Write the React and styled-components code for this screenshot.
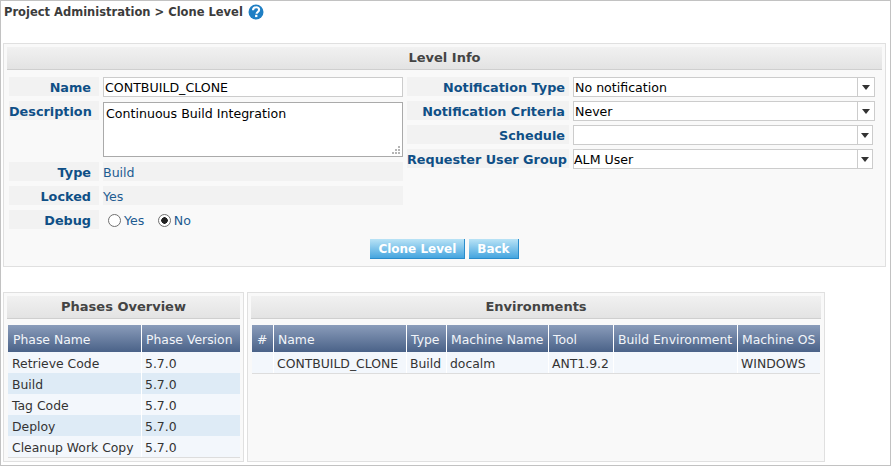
import React from 'react'
import styled, { createGlobalStyle } from 'styled-components'

const GlobalStyle = createGlobalStyle`
	html, body {
		margin: 0;
		padding: 0;
		background: #fff;
	}
	body {
		font-family: "DejaVu Sans", Verdana, sans-serif;
		font-size: 12.6px;
	}
`

const phases = ['Retrieve Code', 'Build', 'Tag Code', 'Deploy', 'Cleanup Work Copy']
const envColumns = [
	['#', 21], ['Name', 133], ['Type', 40], ['Machine Name', 102], ['Tool', 65], ['Build Environment', 124], ['Machine OS', 83],
]
const envRow = ['', 'CONTBUILD_CLONE', 'Build', 'docalm', 'ANT1.9.2', '', 'WINDOWS']

const HelpIcon = () => (
	<svg width="16" height="16" viewBox="0 0 16 16">
		<circle cx="8" cy="8" r="7.5" fill="#1f7fc4" />
		<path d="M5 6.2C5.1 4.3 6.4 3.3 8.1 3.3c1.7 0 3 1 3 2.5 0 1.2-.7 1.8-1.5 2.4-.7.5-1 .9-1 1.6" fill="none" stroke="#fff" strokeWidth="2.1" />
		<rect x="7.1" y="10.8" width="2.3" height="2.3" fill="#fff" />
	</svg>
)

const SelectField = ({ value, narrow }) => (
	<Select $narrow={narrow}>
		<span>{value}</span>
		<SelectArrow $narrow={narrow} />
	</Select>
)

const Radio = ({ label, checked }) => (
	<RadioLabel>
		<RadioDot $checked={checked} />
		{label}
	</RadioLabel>
)

export default function App() {
	return (
		<>
			<GlobalStyle />
			<Page>
				<Title>
					Project Administration &gt; Clone Level
					<HelpIcon />
				</Title>
				<Panel>
					<PanelHeader>Level Info</PanelHeader>
					<FormColumns>
						<LeftForm>
							<Label>Name</Label>
							<TextInput>CONTBUILD_CLONE</TextInput>
							<Label>Description</Label>
							<TextArea>
								Continuous Build Integration
								<Grip width="8" height="8" viewBox="0 0 8 8">
									<path d="M6 0h2v2H6zM3 3h2v2H3zM6 3h2v2H6zM0 6h2v2H0zM3 6h2v2H3zM6 6h2v2H6z" fill="#b5b5b5" />
								</Grip>
							</TextArea>
							<Label>Type</Label>
							<ReadOnly>Build</ReadOnly>
							<Label>Locked</Label>
							<ReadOnly>Yes</ReadOnly>
							<Label>Debug</Label>
							<RadioRow>
								<Radio label="Yes" />
								<Radio label="No" checked />
							</RadioRow>
						</LeftForm>
						<RightForm>
							<Label $tight>Notification Type</Label>
							<SelectField value="No notification" />
							<Label $tight>Notification Criteria</Label>
							<SelectField value="Never" />
							<Label $tight>Schedule</Label>
							<SelectField value="" narrow />
							<Label $tight>Requester User Group</Label>
							<SelectField value="ALM User" narrow />
						</RightForm>
					</FormColumns>
					<Buttons>
						<Button>Clone Level</Button>
						<Button>Back</Button>
					</Buttons>
				</Panel>
				<BottomRow>
					<SidePanel>
						<PanelHeader>Phases Overview</PanelHeader>
						<Table>
							<colgroup>
								<col width="133" />
								<col width="99" />
							</colgroup>
							<thead>
								<tr>
									<Th>Phase Name</Th>
									<Th>Phase Version</Th>
								</tr>
							</thead>
							<tbody>
								{phases.map((name, i) => (
									<tr key={name}>
										<Td $alt={i % 2 === 1}>{name}</Td>
										<Td $alt={i % 2 === 1}>5.7.0</Td>
									</tr>
								))}
							</tbody>
						</Table>
					</SidePanel>
					<MainPanel>
						<PanelHeader>Environments</PanelHeader>
						<Table>
							<colgroup>
								{envColumns.map(([name, width]) => <col key={name} width={width} />)}
							</colgroup>
							<thead>
								<tr>
									{envColumns.map(([name]) => <Th key={name}>{name}</Th>)}
								</tr>
							</thead>
							<tbody>
								<tr>
									{envRow.map((value, i) => <Td key={i}>{value}</Td>)}
								</tr>
							</tbody>
						</Table>
					</MainPanel>
				</BottomRow>
			</Page>
		</>
	)
}

const Page = styled.div`
	box-sizing: border-box;
	width: 891px;
	height: 466px;
	border: 1px solid #c2c2c2;
	padding: 0 4px 0 2px;
	overflow: hidden;
`

const Title = styled.h1`
	display: flex;
	align-items: center;
	gap: 5px;
	height: 22px;
	margin: 0 0 20px 1px;
	font-size: 11.5px;
	font-weight: bold;
	color: #3c3c3c;
`

const Panel = styled.section`
	box-sizing: border-box;
	height: 224px;
	padding: 3px;
	background: #f9f9f9;
	border: 1px solid #e0e0e0;
`

const PanelHeader = styled.h2`
	box-sizing: border-box;
	height: 23px;
	margin: 0;
	font-size: 13px;
	line-height: 21px;
	font-weight: bold;
	text-align: center;
	color: #444;
	background: linear-gradient(#f1f1f1, #e3e3e3);
	border-bottom: 1px solid #cfcfcf;
`

const FormColumns = styled.div`
	display: grid;
	grid-template-columns: 398px 1fr;
	margin: 7px 0 0 2px;
`

const LeftForm = styled.div`
	display: grid;
	grid-template-columns: 90px 300px;
	grid-template-rows: 20px 57px 20px 20px 20px;
	column-gap: 4px;
	row-gap: 4px;
	align-items: start;
`

const RightForm = styled.div`
	display: grid;
	grid-template-columns: 162px 302px;
	grid-auto-rows: 20px;
	column-gap: 4px;
	row-gap: 4px;
	align-content: start;
	align-items: start;
`

const Label = styled.label`
	box-sizing: border-box;
	height: 19px;
	padding-right: ${p => p.$tight ? '4px' : '8px'};
	font-size: 12.8px;
	line-height: 22px;
	font-weight: bold;
	text-align: right;
	white-space: nowrap;
	color: #0f4f86;
	background: #f2f2f2;
`

const TextInput = styled.div`
	box-sizing: border-box;
	height: 20px;
	padding-left: 1px;
	line-height: 19px;
	background: #fff;
	border: 1px solid #ccc;
`

const TextArea = styled.div`
	position: relative;
	box-sizing: border-box;
	height: 55px;
	margin-top: 1px;
	padding: 3px 2px;
	line-height: 16px;
	background: #fff;
	border: 1px solid #aaa;
`

const Grip = styled.svg`
	position: absolute;
	right: 2px;
	bottom: 2px;
`

const ReadOnly = styled.div`
	height: 19px;
	line-height: 21px;
	color: #1d5c91;
	background: #f2f2f2;
`

const RadioRow = styled.div`
	display: flex;
	gap: 13.5px;
	height: 21px;
	padding-left: 5px;
`

const RadioLabel = styled.span`
	display: flex;
	align-items: center;
	gap: 3px;
	color: #1d5c91;
`

const RadioDot = styled.i`
	box-sizing: border-box;
	width: 13px;
	height: 13px;
	border: 1px solid #707070;
	border-radius: 50%;
	background: ${p => p.$checked ? 'radial-gradient(circle, #222 0 3px, #fff 3.5px)' : '#fff'};
`

const Select = styled.div`
	display: flex;
	box-sizing: border-box;
	width: ${p => p.$narrow ? '300px' : '302px'};
	height: 20px;
	line-height: 19px;
	background: #fff;
	border: 1px solid #ccc;
	span {
		flex: 1;
		padding-left: ${p => p.$narrow ? '0' : '1px'};
	}
`

const SelectArrow = styled.b`
	position: relative;
	width: ${p => p.$narrow ? '14px' : '16px'};
	border-left: 1px solid #ccc;
	&::after {
		content: '';
		position: absolute;
		left: ${p => p.$narrow ? '3px' : '4px'};
		top: 7px;
		border: 4px solid transparent;
		border-top: 5px solid #333;
		border-bottom: 0;
	}
`

const Buttons = styled.div`
	display: flex;
	justify-content: center;
	gap: 4px;
	margin-top: 9px;
`

const Button = styled.button`
	box-sizing: border-box;
	height: 20px;
	padding: 0 8px;
	font-family: inherit;
	font-size: 12px;
	font-weight: bold;
	color: #fff;
	background: linear-gradient(#b9e3f6, #45a5df);
	border: 0;
	border-bottom: 1px solid #2a8ccb;
	border-right: 1px solid #2a8ccb;
`

const BottomRow = styled.div`
	display: flex;
	gap: 3px;
	margin-top: 25px;
`

const SidePanel = styled.section`
	box-sizing: border-box;
	width: 241px;
	height: 170px;
	padding: 3px;
	background: #f9f9f9;
	border: 1px solid #e0e0e0;
`

const MainPanel = styled(SidePanel)`
	width: 578px;
`

const Table = styled.table`
	table-layout: fixed;
	width: calc(100% - 2px);
	margin: 6px 0 0 1px;
	border-collapse: separate;
	border-spacing: 0;
	border-bottom: 1px solid #ddd;
`

const Th = styled.th`
	box-sizing: border-box;
	height: 27px;
	padding: 1px 0 0 4px;
	font-size: 12.4px;
	font-weight: normal;
	text-align: left;
	white-space: nowrap;
	color: #f2f5f9;
	background: linear-gradient(#8a9cba, #4a6288);
	border-left: 1px solid #fff;
	&:first-child {
		padding-left: 5px;
		border-left: 0;
	}
`

const Td = styled.td`
	box-sizing: border-box;
	height: 21px;
	padding: 2px 0 0 3px;
	font-size: 12.4px;
	white-space: nowrap;
	color: #333;
	background: ${p => p.$alt ? '#deebf6' : '#f3f7fc'};
	border-left: 1px solid #fff;
	&:first-child {
		padding-left: 4px;
		border-left: 0;
	}
`
